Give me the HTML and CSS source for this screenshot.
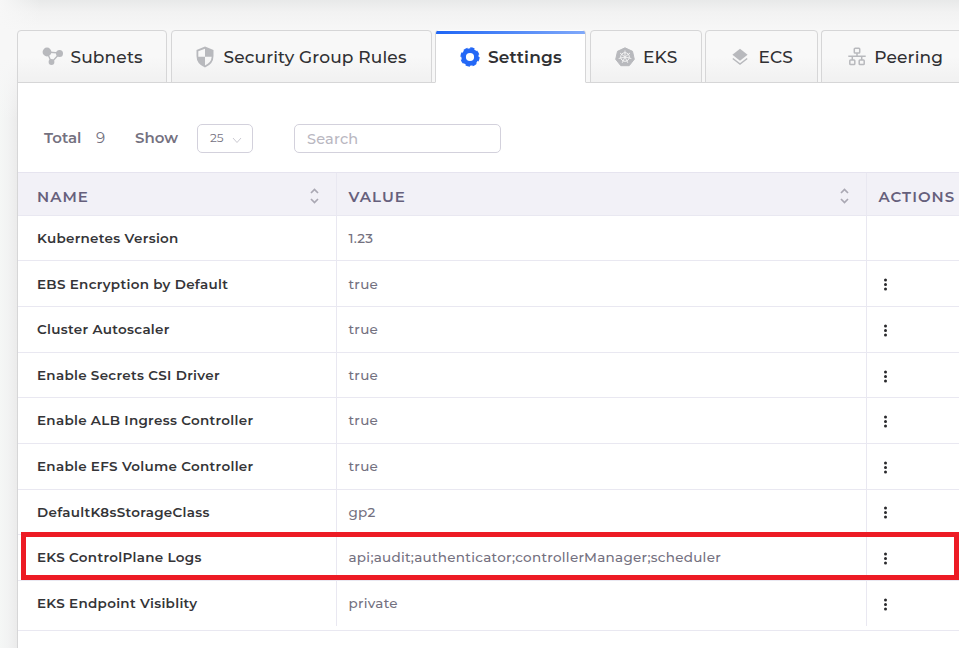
FILE: index.html
```html
<!DOCTYPE html>
<html lang="en">
<head>
<meta charset="utf-8">
<title>Settings</title>
<link rel="stylesheet" href="styles.css">
</head>
<body>
<nav class="tabs">
  <a class="tab tab-subnets"><svg class="icon" width="22" height="20" viewBox="0 0 22 20"><path d="M5 5L18 6L9.500 15.500Z" fill="none" stroke="currentColor" stroke-width="1.300"/><circle cx="5" cy="5" r="4.400"/><circle cx="17.500" cy="6.500" r="3.500"/><circle cx="9.500" cy="15" r="2.900"/></svg><span>Subnets</span></a>
  <a class="tab tab-security"><svg class="icon" width="18" height="22" viewBox="0 0 18 22"><path d="M9 .5L17.500 4V10Q17.500 18 9 21.500Q.5 18 .5 10V4ZM9 2.700L2.300 5.300V10.700H9V19.400Q15.300 16.600 15.700 10.700H9Z" fill-rule="evenodd"/></svg><span>Security Group Rules</span></a>
  <a class="tab tab-settings active"><svg class="icon" width="20" height="20" viewBox="0 0 20 20"><circle cx="10" cy="10" r="6.400" fill="none" stroke="currentColor" stroke-width="4.600"/><circle cx="10" cy="10" r="8.700" fill="none" stroke="currentColor" stroke-width="1.900" stroke-dasharray="4.200 2.633"/></svg><span>Settings</span></a>
  <a class="tab tab-eks"><svg class="icon" width="20" height="20" viewBox="0 0 20 20"><path d="M10 .8L17.500 4.300L19.300 12.300L14.200 18.700H5.800L.7 12.300L2.500 4.300Z" stroke="currentColor" stroke-linejoin="round"/><g fill="none" stroke="#f5f5f5"><circle cx="10" cy="10" r="4.300"/><path d="M10 3.500V9M10 10L15 6M10 10L16.300 11.500M10 10L12.800 15.800M10 10L7.200 15.800M10 10L3.700 11.500M10 10L5 6" stroke-width=".9"/></g></svg><span>EKS</span></a>
  <a class="tab tab-ecs"><svg class="icon" width="16" height="18" viewBox="0 0 16 18"><path d="M8 .8L15.600 6.800L8 12.700L.4 6.800Z"/><path d="M.8 10.500L8 16L15.200 10.500" fill="none" stroke="currentColor" stroke-width="1.500"/></svg><span>ECS</span></a>
  <a class="tab tab-peering"><svg class="icon" width="18" height="19" viewBox="0 0 18 19"><g fill="none" stroke="currentColor" stroke-width="1.500"><rect x="6.300" y="1.300" width="5.400" height="4.700" rx=".8"/><rect x="1.800" y="13" width="5" height="4.500" rx=".8"/><rect x="11.200" y="13" width="5" height="4.500" rx=".8"/><path d="M9 6V9M.3 9.300H17.700M4.300 9V13M13.700 9V13"/></g></svg><span>Peering</span></a>
</nav>
<main class="panel">
  <div class="toolbar">
    <b class="total">Total</b><span class="count">9</span><b class="show">Show</b>
    <div class="select"><span>25</span><svg width="10" height="7" viewBox="0 0 10 7"><path d="M1 1L5 5.500L9 1"/></svg></div>
    <div class="search">Search</div>
  </div>
  <div class="table">
    <div class="row head">
      <div class="cell"><span>NAME</span><svg class="sort" width="9" height="16" viewBox="0 0 9 16"><path d="M1 5L4.500 1.500L8 5M1 11L4.500 14.500L8 11"/></svg></div>
      <div class="cell"><span>VALUE</span><svg class="sort" width="9" height="16" viewBox="0 0 9 16"><path d="M1 5L4.500 1.500L8 5M1 11L4.500 14.500L8 11"/></svg></div>
      <div class="cell"><span>ACTIONS</span></div>
    </div>
    <div class="row first"><div class="cell">Kubernetes Version</div><div class="cell">1.23</div><div class="cell"></div></div>
    <div class="row"><div class="cell">EBS Encryption by Default</div><div class="cell">true</div><div class="cell"><i class="dots"></i></div></div>
    <div class="row"><div class="cell">Cluster Autoscaler</div><div class="cell">true</div><div class="cell"><i class="dots"></i></div></div>
    <div class="row"><div class="cell">Enable Secrets CSI Driver</div><div class="cell">true</div><div class="cell"><i class="dots"></i></div></div>
    <div class="row"><div class="cell">Enable ALB Ingress Controller</div><div class="cell">true</div><div class="cell"><i class="dots"></i></div></div>
    <div class="row"><div class="cell">Enable EFS Volume Controller</div><div class="cell">true</div><div class="cell"><i class="dots"></i></div></div>
    <div class="row"><div class="cell">DefaultK8sStorageClass</div><div class="cell">gp2</div><div class="cell"><i class="dots"></i></div></div>
    <div class="row marked"><div class="cell">EKS ControlPlane Logs</div><div class="cell">api;audit;authenticator;controllerManager;scheduler</div><div class="cell"><i class="dots"></i></div></div>
    <div class="row last"><div class="cell">EKS Endpoint Visiblity</div><div class="cell">private</div><div class="cell"><i class="dots"></i></div></div>
  </div>
</main>
</body>
</html>
```
FILE: styles.css
```css
*, *::before, *::after { box-sizing: border-box; }
html { height: 100%; overflow: hidden; }
body {
  margin: 0;
  height: 648px;
  overflow: hidden;
  padding: 30px 0 0 17px;
  font-family: Montserrat, Inter, sans-serif;
  font-size: 13.5px;
  font-weight: 500;
  color: #74717f;
  background:
    linear-gradient(to right, #f7f7f7 0, rgba(247,247,247,0) 40px) 0 0 / 40px 30px no-repeat,
    linear-gradient(to bottom, #e8e9e9 0, #f2f2f2 12px, rgba(247,247,247,0) 30px) 0 0 / 100% 30px no-repeat,
    linear-gradient(to bottom, #f7f7f7 0, rgba(247,247,247,0) 60px) 0 60px / 17px 60px no-repeat,
    linear-gradient(to right, #f5f7f6 0, #f2f3f3 8px, #ebebeb 17px) 0 60px / 17px 100% no-repeat,
    #f7f7f7;
}
.tabs { display: flex; width: 942px; height: 53px; margin-bottom: -1px; position: relative; }
.tab {
  flex: none;
  display: flex;
  align-items: center;
  height: 53px;
  padding-left: 24px;
  border: 1px solid #d6d6d7;
  border-radius: 4px 4px 0 0;
  background: linear-gradient(#f8f8f8 50%, #f1f1f1);
  color: #303033;
  font-size: 17px;
  letter-spacing: .15px;
  white-space: nowrap;
}
.icon { flex: none; color: #b8b9bd; fill: currentColor; }
.tab-subnets { width: 150px; margin-right: 4px; }
.tab-subnets span { margin-left: 6.500px; }
.tab-security { width: 261px; margin-right: 3px; }
.tab-security span { margin-left: 9.500px; }
.tab-settings { width: 151px; margin-right: 4px; }
.tab-settings span { margin-left: 8px; font-weight: 600; }
.tab-eks { width: 112px; margin-right: 3px; }
.tab-eks span { margin-left: 8px; }
.tab-ecs { width: 113px; margin-right: 3px; padding-left: 26px; }
.tab-ecs span { margin-left: 10.500px; }
.tab-peering { width: 138px; padding-left: 26px; border-right: 0; border-top-right-radius: 0; }
.tab-peering span { margin-left: 8.300px; }
.tab.active {
  border-bottom-color: #fff;
  border-top: 0;
  padding-top: 1px;
  background: linear-gradient(to right, #1f66f5, #80a9fa) 0 1px / 100% 3px no-repeat, #fff;
}
.active .icon { color: #2468f6; }
.panel { width: 942px; height: 566px; border: 1px solid #d6d6d7; border-width: 1px 0 0 1px; background: #fff; }
.toolbar { display: flex; align-items: center; height: 89px; padding: 22px 0 0 26px; font-size: 15px; font-weight: 400; }
.toolbar b { font-weight: 600; }
.toolbar > b, .count { padding-bottom: 2px; }
.total { width: 52px; }
.count { width: 39px; }
.show { width: 62px; }
.select, .search { display: flex; align-items: center; height: 29px; border: 1px solid #d3d1dc; border-radius: 5px; }
.select { width: 56px; padding: 0 0 2px 12px; margin-right: 41px; font-size: 12px; }
.select svg { margin: 6px 0 0 8px; fill: none; stroke: #cbcad2; }
.search { width: 207px; padding-left: 12px; color: #b9b7c1; font-weight: 500; font-size: 14.500px; letter-spacing: .2px; }
.row { display: grid; grid-template-columns: 319px 530px 1fr; height: 45.65px; border-bottom: 1px solid #e9e8f1; letter-spacing: .28px; }
.row.first { height: 45.3px; }
.cell { display: flex; align-items: center; padding: 0 0 .1px 11.500px; border-right: 1px solid #e9e8f1; }
.cell:first-child { padding-left: 19px; }
.cell:last-child { border-right: 0; }
.row:not(.head) .cell:first-child { color: #343437; font-weight: 600; letter-spacing: .3px; }
.row.head { height: 44px; border-top: 1px solid #e6e4ef; background: #f2f1f7; color: #66607c; font-size: 15px; font-weight: 600; letter-spacing: 1px; }
.head .cell { justify-content: space-between; padding-top: 4px; padding-bottom: 0; }
.sort { margin: -1px 17px 0 0; fill: none; stroke: #aaa8b3; stroke-width: 1.700; }
.dots { width: 3px; height: 3px; margin: 2.400px 0 0 5.500px; border-radius: 50%; background: #29292c; box-shadow: 0 -4.400px #29292c, 0 4.400px #29292c; }
.marked { position: relative; }
.marked::after { content: ""; position: absolute; left: 3px; top: -3px; width: 938px; height: 48px; border: 5px solid #ed1b24; }
.row.last { height: 50px; padding-bottom: 4px; }
```
